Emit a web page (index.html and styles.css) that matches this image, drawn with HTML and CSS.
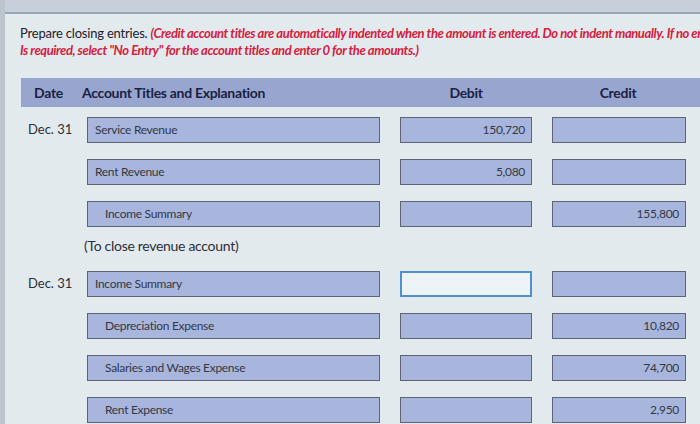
FILE: index.html
```html
<!DOCTYPE html>
<html>
<head>
<meta charset="utf-8">
<link rel="stylesheet" href="styles.css">
</head>
<body>
<div class="topbar"></div>
<div class="content">
  <div class="instr">
    <div class="line">Prepare closing entries. <span class="red">(Credit account titles are automatically indented when the amount is entered. Do not indent manually. If no entry</span></div>
    <div class="line red">Is required, select "No Entry" for the account titles and enter 0 for the amounts.)</div>
  </div>
  <div class="head">
    <div class="h-date">Date</div>
    <div class="h-acct">Account Titles and Explanation</div>
    <div class="h-amt">Debit</div>
    <div class="h-amt">Credit</div>
  </div>
  <div class="rows">
    <div class="row">
      <div class="date">Dec. 31</div>
      <div class="box acct">Service Revenue</div>
      <div class="box amt">150,720</div>
      <div class="box amt"></div>
    </div>
    <div class="row">
      <div class="date"></div>
      <div class="box acct">Rent Revenue</div>
      <div class="box amt">5,080</div>
      <div class="box amt"></div>
    </div>
    <div class="row">
      <div class="date"></div>
      <div class="box acct indent">Income Summary</div>
      <div class="box amt"></div>
      <div class="box amt">155,800</div>
    </div>
    <div class="note">(To close revenue account)</div>
    <div class="row">
      <div class="date">Dec. 31</div>
      <div class="box acct">Income Summary</div>
      <div class="box amt focus"></div>
      <div class="box amt"></div>
    </div>
    <div class="row">
      <div class="date"></div>
      <div class="box acct indent">Depreciation Expense</div>
      <div class="box amt"></div>
      <div class="box amt">10,820</div>
    </div>
    <div class="row">
      <div class="date"></div>
      <div class="box acct indent">Salaries and Wages Expense</div>
      <div class="box amt"></div>
      <div class="box amt">74,700</div>
    </div>
    <div class="row">
      <div class="date"></div>
      <div class="box acct indent">Rent Expense</div>
      <div class="box amt"></div>
      <div class="box amt">2,950</div>
    </div>
  </div>
</div>
</body>
</html>
```

FILE: styles.css
```css
html, body {
  margin: 0;
  padding: 0;
  height: 100%;
  overflow: hidden;
}
body {
  background: #e3eaee;
  font-family: Lato, "Open Sans", sans-serif;
  color: #2b2f38;
  border-left: 5px solid #bcc5cc;
  box-sizing: border-box;
}
.topbar {
  height: 12px;
  background: #c6cfda;
  border-bottom: 2px solid #98a5b8;
}
.content {
  padding: 11px 0 0 15px;
}
.instr {
  font-size: 13px;
  line-height: 17px;
  letter-spacing: -0.2px;
  white-space: nowrap;
  color: #1e2128;
}
.red {
  color: #d4203c;
  font-weight: bold;
  font-style: italic;
  letter-spacing: -0.42px;
}
.head {
  display: flex;
  align-items: center;
  height: 29px;
  margin: 19px 0 10px 1px;
  background: #98a6cf;
  color: #1b2142;
  font-weight: bold;
  font-size: 14px;
  letter-spacing: -0.3px;
}
.h-date {
  width: 48px;
  padding-left: 13px;
}
.h-acct {
  width: 298px;
}
.h-amt {
  width: 132px;
  text-align: center;
  margin-left: 20px;
}
.row {
  display: grid;
  grid-template-columns: 47px 293px 132px 134px;
  column-gap: 20px;
  height: 26px;
  margin-bottom: 16px;
}
.date {
  font-size: 13px;
  padding-left: 8px;
  line-height: 24px;
  white-space: nowrap;
  color: #2b2f38;
}
.box {
  box-sizing: border-box;
  height: 26px;
  background: #a8b6de;
  border: 1px solid #5d6473;
  font-size: 12px;
  letter-spacing: -0.3px;
  line-height: 24px;
  color: #333844;
}
.acct {
  padding-left: 7px;
}
.acct.indent {
  padding-left: 17px;
}
.amt {
  text-align: right;
  padding-right: 6px;
}
.focus {
  background: #edf3f6;
  border: 2px solid #4f8fd4;
}
.note {
  font-size: 14px;
  letter-spacing: -0.3px;
  height: 18px;
  line-height: 18px;
  margin: -6px 0 16px 64px;
  color: #2b2f38;
}
```
